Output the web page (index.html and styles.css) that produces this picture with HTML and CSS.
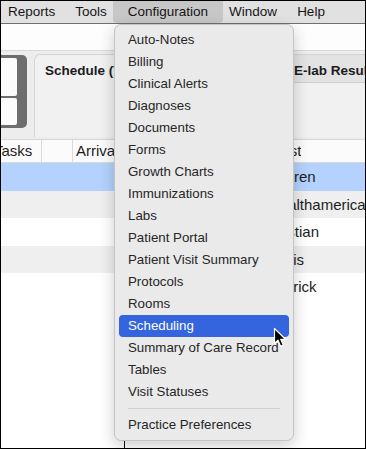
FILE: index.html
```html
<!DOCTYPE html>
<html lang="en">
<head>
  <meta charset="UTF-8" />
  <title>Configuration menu</title>
  <link rel="stylesheet" href="styles.css">
</head>
<body>

  <div class="screen">
    <div class="menubar">
      <div class="menubar-item">Reports</div>
      <div class="menubar-item">Tools</div>
      <div class="menubar-item open">Configuration</div>
      <div class="menubar-item">Window</div>
      <div class="menubar-item">Help</div>
    </div>

    <div class="title-band"></div>

    <div class="toolbar">
      <div class="side">
        <div class="dark-box">
          <div class="slot slot-top"></div>
          <div class="slot slot-bottom"></div>
        </div>
      </div>
      <div class="tab-pane">
        <div class="tab-row">
          <div class="tab active">Schedule (Today)</div>
          <div class="tab">E-lab Results</div>
        </div>
      </div>
    </div>

    <div class="grid">
      <div class="grid-head">
        <div class="cell c-tasks"><span class="shift">Tasks</span></div>
        <div class="cell c-flag"></div>
        <div class="cell c-arrival">Arrival</div>
        <div class="cell c-time">Time</div>
        <div class="cell c-name">Last</div>
      </div>
      <div class="grid-row selected"><div class="cell c-name">Lauren</div></div>
      <div class="grid-row alt"><div class="cell c-name">Healthamerica</div></div>
      <div class="grid-row"><div class="cell c-name">Kristian</div></div>
      <div class="grid-row alt"><div class="cell c-name">Doris</div></div>
      <div class="grid-row"><div class="cell c-name">Derrick</div></div>
      <div class="grid-rest">
        <div class="rest-left"></div>
        <div class="rest-right"></div>
      </div>
    </div>

    <div class="dropdown">
      <div class="dd-item">Auto-Notes</div>
      <div class="dd-item">Billing</div>
      <div class="dd-item">Clinical Alerts</div>
      <div class="dd-item">Diagnoses</div>
      <div class="dd-item">Documents</div>
      <div class="dd-item">Forms</div>
      <div class="dd-item">Growth Charts</div>
      <div class="dd-item">Immunizations</div>
      <div class="dd-item">Labs</div>
      <div class="dd-item">Patient Portal</div>
      <div class="dd-item">Patient Visit Summary</div>
      <div class="dd-item">Protocols</div>
      <div class="dd-item">Rooms</div>
      <div class="dd-item hover">Scheduling</div>
      <div class="dd-item">Summary of Care Record</div>
      <div class="dd-item">Tables</div>
      <div class="dd-item">Visit Statuses</div>
      <div class="dd-sep"></div>
      <div class="dd-item">Practice Preferences</div>
    </div>

    <svg class="pointer" width="14" height="21" viewBox="0 0 14 21">
      <path d="M1.5 1.5 L1.5 16.5 L5 13.2 L7.6 19.2 L10.2 18.1 L7.7 12.3 L12.5 12.3 Z"
            fill="#000" stroke="#fff" stroke-width="1.2" stroke-linejoin="round"/>
    </svg>
  </div>

</body>
</html>
```

FILE: styles.css
```css
body {
  margin: 0;
  background: #fff;
  font-family: "Liberation Sans", Arial, sans-serif;
}
.screen {
  width: 366px;
  height: 449px;
  box-sizing: border-box;
  border: 1px solid #000;
  position: relative;
  overflow: hidden;
  background: #fff;
}

/* top menu bar */
.menubar {
  display: flex;
  height: 22px;
  background: #e1e1e1;
  border-bottom: 1px solid #707070;
  font-size: 13.5px;
  color: #151515;
}
.menubar-item {
  padding: 0 10px;
  line-height: 22px;
  white-space: nowrap;
}
.menubar-item:first-child {
  padding-left: 7px;
}
.menubar-item.open {
  background: #c7c7c7;
  padding: 0 15px;
  margin: 0 -4px;
  border-radius: 0 0 4px 4px;
}

.title-band {
  height: 26px;
  background: #fdfdfd;
  border-bottom: 1px solid #d9d9d9;
}

/* toolbar with tabs */
.toolbar {
  display: flex;
  height: 88px;
  background: #ededed;
  border-bottom: 1px solid #d6d6d6;
}
.side {
  width: 33px;
  flex-shrink: 0;
}
.dark-box {
  margin-top: 4px;
  width: 16px;
  height: 67px;
  padding: 3px 10px 3px 0;
  background: #6e6e6e;
  border-radius: 0 5px 5px 0;
  display: flex;
  flex-direction: column;
  gap: 2px;
}
.slot {
  background: #fbfbfb;
  border-radius: 0 2px 2px 0;
}
.slot-top {
  height: 38px;
}
.slot-bottom {
  flex: 1;
}
.tab-pane {
  flex: 1;
  min-width: 0;
  margin-top: 3px;
  margin-bottom: 2px;
  border-top: 1px solid #d4d4d4;
  border-left: 1px solid #d4d4d4;
  border-top-left-radius: 6px;
  background: #f1f1f1;
}
.tab-row {
  display: flex;
  height: 28px;
}
.tab {
  font-size: 13.5px;
  font-weight: bold;
  color: #1c1c1c;
  line-height: 24px;
  padding-top: 4px;
  padding-left: 10px;
  white-space: nowrap;
  overflow: hidden;
}
.tab.active {
  width: 238px;
  flex-shrink: 0;
}
.tab + .tab {
  flex: 1;
  min-width: 0;
  background: #e3e3e3;
  border-left: 1px solid #cfcfcf;
  border-bottom: 1px solid #cfcfcf;
}

/* patient grid */
.grid {
  font-size: 15px;
  color: #1e1e1e;
}
.grid-head,
.grid-row {
  display: flex;
  white-space: nowrap;
}
.grid-head {
  height: 22px;
  line-height: 22px;
  background: #fbfbfb;
  border-bottom: 1px solid #d8d8d8;
}
.grid-head .cell {
  border-right: 1px solid #dadada;
}
.grid-row {
  height: 27.5px;
  line-height: 27.5px;
}
.grid-row.selected {
  background: #b4d2fd;
}
.grid-row.alt {
  background: #efefef;
}
.cell {
  overflow: hidden;
  box-sizing: border-box;
  flex-shrink: 0;
}
.c-tasks { width: 41px; }
.c-flag { width: 31px; }
.c-arrival { width: 120px; padding-left: 3px; }
.c-time { width: 80px; padding-left: 4px; }
.c-name { padding-left: 0; border-right: 0 !important; }
.grid-row .c-name { margin-left: 268px; }
.shift {
  margin-left: -7px;
}
.grid-rest {
  display: flex;
  height: 150px;
}
.rest-left {
  width: 123px;
  border-right: 1px solid #111;
}

/* open dropdown */
.dropdown {
  position: absolute;
  left: 113px;
  top: 23px;
  width: 178px;
  padding: 4px 0;
  background: #eaeaea;
  border: 1px solid #c4c4c4;
  border-radius: 7px;
  box-shadow: 0 5px 16px rgba(0,0,0,0.2);
  font-size: 13.3px;
  color: #262626;
}
.dd-item {
  height: 22px;
  line-height: 22px;
  margin: 0 4px;
  padding-left: 9px;
  border-radius: 4px;
  white-space: nowrap;
}
.dd-item.hover {
  background: #3465de;
  color: #fff;
}
.dd-sep {
  height: 1px;
  margin: 5px 13px;
  background: #d0d0d0;
}

.pointer {
  position: absolute;
  left: 272px;
  top: 326px;
}
```
